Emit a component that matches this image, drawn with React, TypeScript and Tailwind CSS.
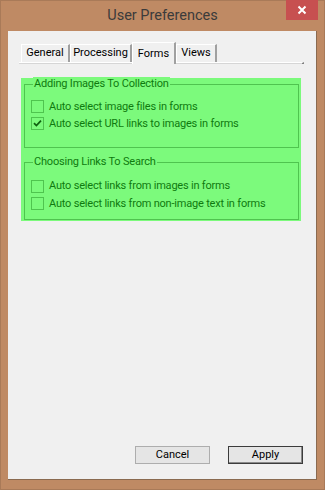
import React from "react";

const font = { fontFamily: 'Roboto, "Liberation Sans", sans-serif' };

function Check({ checked }: { checked?: boolean }) {
  return (
    <span className="w-[13px] h-[13px] border border-[#4fc44f] bg-[#7cfa7c] flex items-center justify-center shrink-0">
      {checked && (
        <svg width="9" height="9" viewBox="0 0 9 9">
          <path d="M1 4.2 L3.4 6.6 L8 1.6" stroke="#0f5f0f" strokeWidth="1.7" fill="none" />
        </svg>
      )}
    </span>
  );
}

function Row({ label, checked, h }: { label: string; checked?: boolean; h: string }) {
  return (
    <div className={`flex items-center gap-[5px] ${h}`}>
      <Check checked={checked} />
      <span className="text-[11px] leading-[14px] tracking-[-0.2px] text-[#0f7a0f] whitespace-nowrap">{label}</span>
    </div>
  );
}

function Tab({ label, selected, w }: { label: string; selected?: boolean; w: string }) {
  if (selected) {
    return (
      <div className={`${w} h-[22px] -mb-[2px] flex justify-center pt-[3px] bg-[#f0f0f0] border-t border-l border-white border-r-2 border-r-[#a0a0a0] text-[11px] text-black relative z-10`}>
        {label}
      </div>
    );
  }
  return (
    <div className={`${w} h-[18px] flex items-center justify-center bg-[#f0f0f0] border-t border-l border-white border-r-2 border-r-[#a0a0a0] text-[11px] text-black`}>
      {label}
    </div>
  );
}

export default function App() {
  return (
    <div className="w-[325px] h-[490px] bg-[#bf8a64] flex flex-col border border-[#a97a58]" style={font}>
      <div className="h-[30px] relative flex items-center justify-center">
        <span className="text-[14.5px] text-[#3b3b3b]">User Preferences</span>
        <div className="absolute right-[6px] -top-[1px] w-[32px] h-[20px] bg-[#c75050] flex items-center justify-center">
          <svg width="10" height="10" viewBox="0 0 10 10">
            <path d="M1.5 1.5 L8.5 8.5 M8.5 1.5 L1.5 8.5" stroke="white" strokeWidth="2" />
          </svg>
        </div>
      </div>
      <div className="mx-[7px] flex-1 bg-[#f0f0f0] flex flex-col border-r border-r-[#8a6a50] border-b border-b-[#8a6a50]">
        <div className="ml-[11px] w-[285px] mt-[11px]">
          <div className="flex items-end pl-[2px] h-[20px]">
            <Tab w="w-[49px]" label="General" />
            <Tab w="w-[62px]" label="Processing" />
            <Tab w="w-[44px]" label="Forms" selected />
            <Tab w="w-[41px]" label="Views" />
          </div>
          <div className="h-[2px] bg-[#d6d6d6] border-t border-white border-r-2 border-r-[#808080]" />
          <div className="ml-[2px] mt-[14px] w-[280px] bg-[#7cfa7c] pt-[6px] pl-[3px] pr-[2px] pb-[1px]">
            <div className="border border-[#4fc44f] pl-[6px] pb-[15px]">
              <div className="-mt-[8px] ml-[2px] w-fit bg-[#7cfa7c] px-[1px] text-[11px] leading-[14px] tracking-[-0.2px] text-[#0f7a0f]">
                Adding Images To Collection
              </div>
              <div className="mt-[7px]">
                <Row h="h-[17px]" label="Auto select image files in forms" />
                <Row h="h-[17px]" checked label="Auto select URL links to images in forms" />
              </div>
            </div>
            <div className="mt-[14px] border border-[#4fc44f] pl-[6px] pb-[7px]">
              <div className="-mt-[8px] ml-[2px] w-fit bg-[#7cfa7c] px-[1px] text-[11px] leading-[14px] tracking-[-0.2px] text-[#0f7a0f]">
                Choosing Links To Search
              </div>
              <div className="mt-[8px]">
                <Row h="h-[18px]" label="Auto select links from images in forms" />
                <Row h="h-[17px]" label="Auto select links from non-image text in forms" />
              </div>
            </div>
          </div>
        </div>
        <div className="flex-1" />
        <div className="flex justify-end gap-[18px] pr-[13px] pb-[15px]">
          <button className="w-[75px] h-[18px] border border-[#adadad] bg-[#e5e5e5] text-[11px] leading-[14px] text-black">
            Cancel
          </button>
          <button className="w-[75px] h-[18px] border border-[#3c3c3c] bg-[#e5e5e5] text-[11px] leading-[14px] text-black shadow-[inset_-1px_-1px_0_#8a8a8a]">
            Apply
          </button>
        </div>
      </div>
      <div className="h-[9px]" />
    </div>
  );
}
